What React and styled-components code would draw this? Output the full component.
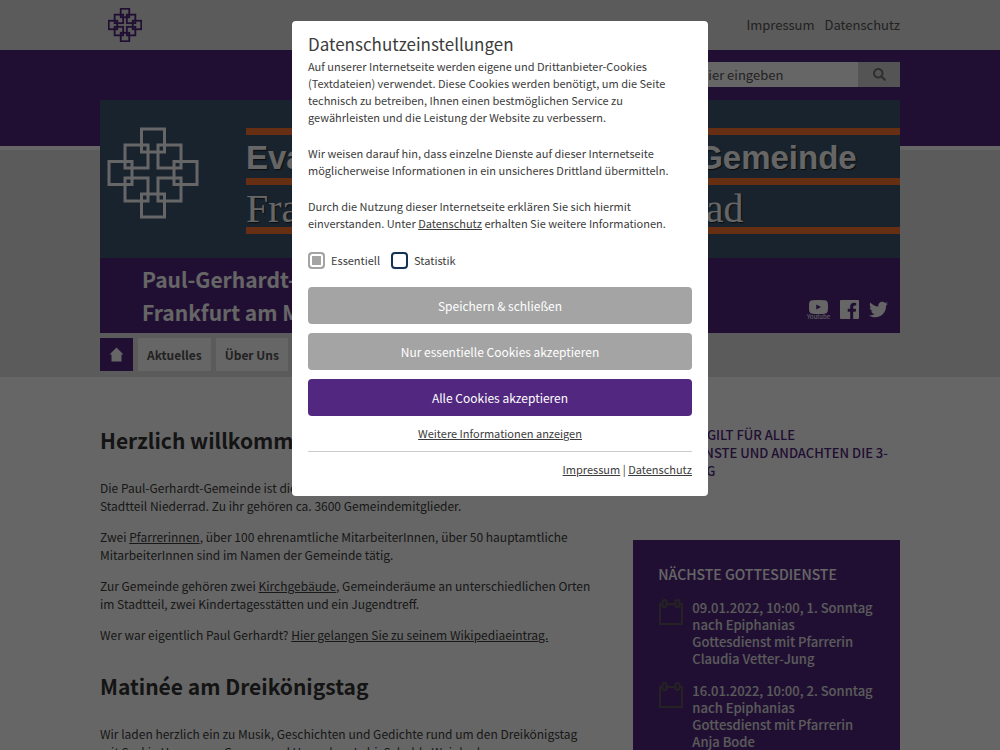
import React, { useState } from "react";
import styled, { createGlobalStyle } from "styled-components";
import { FaSearch, FaTwitter } from "react-icons/fa";

const sans = `"Noto Sans CJK SC", "Open Sans", sans-serif`;

const GlobalStyle = createGlobalStyle`
    *{ box-sizing:border-box; }
    body{
        margin:0;
        background-color:#fff;
        color:#3c3c3c;
        font-family:${sans};
        font-size:12px;
        line-height:18px;
    }
    a{ color:inherit; }
    h1, h2, h3, p, ul{ margin:0; padding:0; font-size:inherit; }
    ul{ list-style:none; }
    button, input{ font-family:inherit; border:0; padding:0; margin:0; }
`;

const Page = styled.div`
    height:100vh;
    overflow:hidden;
`;

const Container = styled.div`
    width:80%;
    max-width:1200px;
    margin:0 auto;
`;

const TopBar = styled.div`
    background-color:#e3e3e3;
`;

const TopInner = styled(Container)`
    display:flex;
    align-items:center;
    justify-content:space-between;
    height:50px;
    padding-left:8px;
`;

const TopNav = styled.nav`
    display:flex;
    gap:10px;
    color:#555;
    font-size:13px;

    a{ text-decoration:none; }
`;

const Header = styled.header`
    background:linear-gradient(#52277f 96px, #fff 96px, #fff 100px, #e3e3e3 100px);
    padding-bottom:6px;
`;

const SearchForm = styled.form`
    display:flex;
    justify-content:flex-end;
    padding:12px 0 13px;
`;

const SearchInput = styled.input`
    width:238px;
    height:25px;
    padding:0 8px;
    background-color:#fff;
    color:#555;
    font-size:13px;

    &::placeholder{ color:#555; opacity:1; }
`;

const SearchButton = styled.button`
    display:flex;
    align-items:center;
    justify-content:center;
    width:42px;
    height:25px;
    background-color:#d3d3d3;
    color:#777;
`;

const Banner = styled.div`
    display:flex;
    height:158px;
    padding:27px 0 0 7px;
    background-color:#3c5873;
`;

const BannerText = styled.div`
    flex:1;
    margin-left:47px;
    padding-top:1px;
    color:#fff;
    white-space:nowrap;
`;

const Stripe = styled.div`
    height:7px;
    background-color:#ff7430;
`;

const BannerLine = styled.p`
    height:${(props) => (props.$serif ? "42px" : "43px")};
    font:${(props) => (props.$serif
        ? `40px/48px "Liberation Serif", serif`
        : `bold 33px/46px "Liberation Sans", sans-serif`)};
    text-shadow:1px 1px 1px #222;
`;

const TitleBar = styled.div`
    display:flex;
    align-items:flex-end;
    justify-content:space-between;
    padding:5px 12px 3px 42px;
    background-color:#52277f;
    color:#fff;
`;

const SiteTitle = styled.h1`
    font-size:21px;
    line-height:33px;
    font-weight:700;
    padding-bottom:1px;
`;

const Social = styled.div`
    display:flex;
    align-items:flex-start;
    gap:10px;
    height:30px;

    a{ display:block; text-decoration:none; }
    svg{ display:block; }
`;

const YoutubeLink = styled.a`
    font-size:6px;
    line-height:6px;
    text-align:center;

    svg{ margin:0 auto; }
`;

const MainNav = styled.nav`
    display:flex;
    gap:5px;
    margin-top:5px;
`;

const NavItem = styled.a`
    display:flex;
    align-items:center;
    justify-content:center;
    height:33px;
    width:${(props) => (props.$home ? "33px" : "auto")};
    padding:0 ${(props) => (props.$home ? "0" : "9px")};
    background-color:${(props) => (props.$home ? "#52277f" : "#fff")};
    color:${(props) => (props.$home ? "#fff" : "#555")};
    font-size:12px;
    font-weight:700;
    text-decoration:none;
`;

const Columns = styled(Container)`
    display:grid;
    grid-template-columns:2fr 1fr;
    padding-top:49px;
`;

const Content = styled.main`
    padding-right:33px;

    p{ margin-bottom:13px; }
`;

const Headline = styled.h2`
    margin:${(props) => (props.$next ? "28px" : "0")} 0 24px;
    padding-bottom:1px;
    color:#333;
    font-size:21px;
    line-height:28px;
    font-weight:700;
`;

const Notice = styled.h2`
    color:#52277f;
    font-size:13px;
    line-height:18px;
    font-weight:500;
    text-transform:uppercase;
`;

const Dates = styled.section`
    margin-top:60px;
    padding:25px;
    background-color:#52277f;
    color:#fff;
`;

const DatesTitle = styled.h3`
    margin-bottom:16px;
    font-size:14px;
    line-height:18px;
    font-weight:500;
    text-transform:uppercase;
`;

const DateItem = styled.li`
    display:flex;
    gap:8px;
    margin-bottom:15px;
    color:#e3e3e3;
    font-size:13px;
    line-height:17px;
    font-weight:500;

    svg{ flex:none; }
`;

const Overlay = styled.div`
    position:fixed;
    inset:0;
    display:flex;
    align-items:flex-start;
    justify-content:center;
    padding-top:21px;
    background-color:rgba(0, 0, 0, .6);
`;

const Modal = styled.div`
    width:416px;
    padding:12px 16px 18px;
    background-color:#fff;
    border-radius:4px;
    font-size:11px;
    line-height:17px;
`;

const ModalTitle = styled.h2`
    margin-bottom:3px;
    font-size:17px;
    line-height:22px;
    font-weight:400;
`;

const ModalText = styled.p`
    margin-bottom:19px;
    padding-right:16px;
`;

const Options = styled.div`
    display:flex;
    gap:11px;
    margin:20px 0 18px;
`;

const Option = styled.label`
    display:flex;
    align-items:center;
    gap:6px;
`;

const Check = styled.input`
    appearance:none;
    width:17px;
    height:17px;
    border:2px solid #143352;
    border-radius:4px;
    background-color:#fff;

    &:checked{ box-shadow:inset 0 0 0 2px #fff; background-color:#143352; }
    &:disabled{ border-color:#a4a4a4; background-color:#a4a4a4; }
`;

const ModalButton = styled.button`
    display:block;
    width:100%;
    height:37px;
    margin-bottom:9px;
    border-radius:4px;
    background-color:${(props) => (props.$primary ? "#52277f" : "#a4a4a4")};
    color:#fff;
    font-size:12px;
`;

const More = styled.p`
    padding-bottom:9px;
    border-bottom:1px solid #ccc;
    text-align:center;
`;

const Legal = styled.p`
    padding-top:9px;
    text-align:right;
`;

// overlapping squares as [x, y] of their top left corner
const squares = [
    [34.5, 2], [18, 18], [51, 18], [2, 34.5],
    [67, 34.5], [18, 51], [51, 51], [34.5, 67],
];

const CrossLogo = ({ size, color, stroke }) => (
    <svg width={size} height={size} viewBox="0 0 92 92" fill="none" stroke={color} strokeWidth={stroke}>
        {squares.map(([x, y]) => (
            <rect key={`${x}-${y}`} x={x} y={y} width="23" height="23" />
        ))}
    </svg>
);

const YoutubeIcon = () => (
    <svg width="19" height="14" viewBox="0 0 19 14">
        <path fill="#fff" fillRule="evenodd" d="M3 0.3Q9.500-.3 16 .3Q18.500.6 18.800 3Q19.200 7 18.800 11Q18.500 13.400 16 13.700Q9.500 14.300 3 13.700Q.5 13.400.2 11Q-.2 7 .2 3Q.5.6 3 .3ZM7.300 4.500V9.500L12 7Z" />
    </svg>
);

const FacebookIcon = () => (
    <svg width="19" height="19" viewBox="0 0 19 19">
        <path fill="#fff" d="M1 0H18Q19 0 19 1V18Q19 19 18 19H13.200V11.700H15.700L16.100 8.800H13.200V7Q13.200 5.500 14.700 5.500H16.200V2.900Q15.400 2.800 14 2.800Q10.200 2.800 10.200 6.600V8.800H7.700V11.700H10.200V19H1Q0 19 0 18V1Q0 0 1 0Z" />
    </svg>
);

const HomeIcon = () => (
    <svg width="15" height="15" viewBox="0 0 15 15">
        <path fill="#fff" d="M7.500 0.500L0.500 7.500H2.500V14.500H12.500V7.500H14.500Z" />
    </svg>
);

const CalendarIcon = () => (
    <svg width="26" height="27" viewBox="0 0 26 27" fill="none" stroke="#5c5658" strokeWidth="2">
        <path d="M4 5H2V25H24V5H22M9 5H17" />
        <rect x="4.500" y="1" width="4" height="7" rx="2" />
        <rect x="17.500" y="1" width="4" height="7" rx="2" />
    </svg>
);

const navItems = ["Aktuelles", "Über Uns", "Gottesdienste", "Gruppen"];

const services = [
    { date: "09.01.2022, 10:00, 1. Sonntag nach Epiphanias", text: "Gottesdienst mit Pfarrerin Claudia Vetter-Jung" },
    { date: "16.01.2022, 10:00, 2. Sonntag nach Epiphanias", text: "Gottesdienst mit Pfarrerin Anja Bode" },
];

const CookieModal = () => {
    const [statistik, setStatistik] = useState(false);

    return (
        <Overlay>
            <Modal role="dialog" aria-labelledby="cookie-title">
                <ModalTitle id="cookie-title">Datenschutzeinstellungen</ModalTitle>
                <ModalText>
                    Auf unserer Internetseite werden eigene und Drittanbieter-Cookies (Textdateien) verwendet. Diese Cookies werden benötigt, um die Seite technisch zu betreiben, Ihnen einen bestmöglichen Service zu gewährleisten und die Leistung der Website zu verbessern.
                </ModalText>
                <ModalText>
                    Wir weisen darauf hin, dass einzelne Dienste auf dieser Internetseite möglicherweise Informationen in ein unsicheres Drittland übermitteln.
                </ModalText>
                <ModalText>
                    Durch die Nutzung dieser Internetseite erklären Sie sich hiermit einverstanden. Unter <a href="#datenschutz">Datenschutz</a> erhalten Sie weitere Informationen.
                </ModalText>
                <Options>
                    <Option>
                        <Check type="checkbox" checked disabled readOnly />
                        Essentiell
                    </Option>
                    <Option>
                        <Check type="checkbox" checked={statistik} onChange={(e) => setStatistik(e.target.checked)} />
                        Statistik
                    </Option>
                </Options>
                <ModalButton type="button">Speichern &amp; schließen</ModalButton>
                <ModalButton type="button">Nur essentielle Cookies akzeptieren</ModalButton>
                <ModalButton type="button" $primary>Alle Cookies akzeptieren</ModalButton>
                <More><a href="#mehr">Weitere Informationen anzeigen</a></More>
                <Legal>
                    <a href="#impressum">Impressum</a> | <a href="#datenschutz">Datenschutz</a>
                </Legal>
            </Modal>
        </Overlay>
    );
};

const App = () => {
    return (
        <Page>
            <GlobalStyle />
            <TopBar>
                <TopInner>
                    <CrossLogo size={34} color="#52277f" stroke={5} />
                    <TopNav>
                        <a href="#impressum">Impressum</a>
                        <a href="#datenschutz">Datenschutz</a>
                    </TopNav>
                </TopInner>
            </TopBar>
            <Header>
                <Container>
                    <SearchForm>
                        <SearchInput type="text" aria-label="Suche" placeholder="Suchbegriff hier eingeben" />
                        <SearchButton type="submit" aria-label="Suchen"><FaSearch size={13} /></SearchButton>
                    </SearchForm>
                    <Banner>
                        <CrossLogo size={92} color="#fff" stroke={3} />
                        <BannerText>
                            <Stripe />
                            <BannerLine>Evangelische Paul-Gerhardt-Gemeinde</BannerLine>
                            <Stripe />
                            <BannerLine $serif>Frankfurt am Main - Niederrad</BannerLine>
                            <Stripe />
                        </BannerText>
                    </Banner>
                    <TitleBar>
                        <SiteTitle>Paul-Gerhardt-Gemeinde<br />Frankfurt am Main-Niederrad</SiteTitle>
                        <Social>
                            <YoutubeLink href="#youtube"><YoutubeIcon />Youtube</YoutubeLink>
                            <a href="#facebook" aria-label="Facebook"><FacebookIcon /></a>
                            <a href="#twitter" aria-label="Twitter"><FaTwitter size={19} /></a>
                        </Social>
                    </TitleBar>
                    <MainNav>
                        <NavItem href="#start" $home aria-label="Startseite"><HomeIcon /></NavItem>
                        {navItems.map((item) => (
                            <NavItem key={item} href="#nav">{item}</NavItem>
                        ))}
                    </MainNav>
                </Container>
            </Header>
            <Columns>
                <Content>
                    <Headline>Herzlich willkommen</Headline>
                    <p>Die Paul-Gerhardt-Gemeinde ist die evangelische Kirchengemeinde im Frankfurter<br />Stadtteil Niederrad. Zu ihr gehören ca. 3600 Gemeindemitglieder.</p>
                    <p>Zwei <a href="#pfarrerinnen">Pfarrerinnen</a>, über 100 ehrenamtliche MitarbeiterInnen, über 50 hauptamtliche<br />MitarbeiterInnen sind im Namen der Gemeinde tätig.</p>
                    <p>Zur Gemeinde gehören zwei <a href="#kirchen">Kirchgebäude</a>, Gemeinderäume an unterschiedlichen Orten<br />im Stadtteil, zwei Kindertagesstätten und ein Jugendtreff.</p>
                    <p>Wer war eigentlich Paul Gerhardt? <a href="#wiki">Hier gelangen Sie zu seinem Wikipediaeintrag.</a></p>
                    <Headline $next>Matinée am Dreikönigstag</Headline>
                    <p>Wir laden herzlich ein zu Musik, Geschichten und Gedichte rund um den Dreikönigstag<br />mit Saskia Herrmann, Gesang und Hannelore Lehi, Schulde Weinlaub.</p>
                </Content>
                <aside>
                    <Notice>Ab sofort gilt für alle Gottesdienste und Andachten die 3-<wbr />G-Regelung</Notice>
                    <Dates>
                        <DatesTitle>Nächste Gottesdienste</DatesTitle>
                        <ul>
                            {services.map((item) => (
                                <DateItem key={item.date}>
                                    <CalendarIcon />
                                    <div>
                                        <p>{item.date}</p>
                                        <p>{item.text}</p>
                                    </div>
                                </DateItem>
                            ))}
                        </ul>
                    </Dates>
                </aside>
            </Columns>
            <CookieModal />
        </Page>
    );
}


export default App
